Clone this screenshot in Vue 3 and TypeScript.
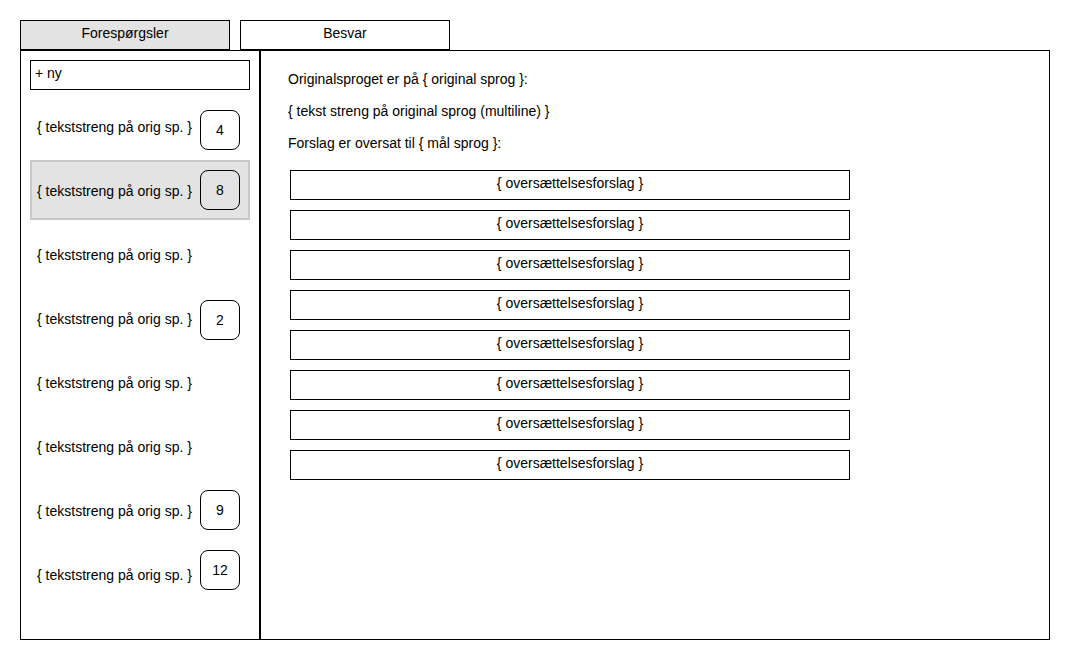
<script setup lang="ts">
import { ref } from 'vue'

interface TranslationRequest {
  id: number
  text: string
  answers: number | null
}

const tabs: string[] = ['Forespørgsler', 'Besvar']
const activeTab = ref<number>(0)

const counts: (number | null)[] = [4, 8, null, 2, null, null, 9, 12]
const requests: TranslationRequest[] = counts.map((answers, id) => ({
  id,
  text: '{ tekststreng på orig sp. }',
  answers,
}))
const selected = ref<number>(1)

const suggestions: string[] = Array.from({ length: 8 }, () => '{ oversættelsesforslag }')
</script>

<template>
  <div class="page">
    <nav class="tabs">
      <button
        v-for="(tab, i) in tabs"
        :key="tab"
        type="button"
        class="tab"
        :class="{ active: i === activeTab }"
        @click="activeTab = i"
      >
        {{ tab }}
      </button>
    </nav>

    <div class="panels">
      <aside class="sidebar">
        <button type="button" class="new">+ ny</button>
        <div class="requests">
          <ul class="labels">
            <li v-for="r in requests" :key="r.id">
              <button
                type="button"
                class="request"
                :class="{ selected: r.id === selected }"
                @click="selected = r.id"
              >
                {{ r.text }}
              </button>
            </li>
          </ul>
          <ul class="counts">
            <li v-for="r in requests" :key="r.id">
              <span v-if="r.answers !== null" class="count">{{ r.answers }}</span>
            </li>
          </ul>
        </div>
      </aside>

      <main class="detail">
        <p>Originalsproget er på { original sprog }:</p>
        <p>{ tekst streng på original sprog (multiline) }</p>
        <p>Forslag er oversat til { mål sprog }:</p>
        <ul class="suggestions">
          <li v-for="(s, i) in suggestions" :key="i">
            <button type="button" class="suggestion">{{ s }}</button>
          </li>
        </ul>
      </main>
    </div>
  </div>
</template>

<style>
body {
  margin: 0;
  background: #fff;
}
</style>

<style scoped>
.page,
.page * {
  box-sizing: border-box;
}

.page {
  display: flex;
  flex-direction: column;
  min-height: 100vh;
  padding: 20px;
  color: #000;
  font-family: "Liberation Sans", Arial, sans-serif;
  font-size: 14px;
  line-height: 16px;
}

button {
  margin: 0;
  color: inherit;
  font: inherit;
  background: #fff;
  border: 1px solid #000;
  border-radius: 0;
  cursor: pointer;
}

ul {
  margin: 0;
  padding: 0;
  list-style: none;
}

.tabs {
  display: flex;
  gap: 10px;
}

.tab {
  width: 210px;
  padding: 4px 4px 8px;
}

.tab.active {
  background: #e3e3e3;
}

.panels {
  display: flex;
  flex: 1;
}

.sidebar {
  width: 240px;
  flex-shrink: 0;
  padding: 9px;
  border: 1px solid #000;
}

.new {
  display: block;
  width: 100%;
  padding: 4px 4px 8px;
  text-align: left;
}

.requests {
  display: grid;
  grid-template-columns: 1fr 50px;
  padding-top: 6px;
}

.labels {
  grid-area: 1 / 1 / 2 / 3;
}

.labels li {
  height: 64px;
}

.request {
  display: block;
  width: 100%;
  height: 60px;
  padding: 2px 5px 0;
  text-align: left;
  white-space: nowrap;
  background: transparent;
  border: 2px solid transparent;
}

.request.selected {
  background: #e3e3e3;
  border-color: #c8c8c8;
}

.counts {
  display: grid;
  grid-area: 1 / 2 / 2 / 3;
  grid-template-rows: 60px 60px 70px 60px 65px 65px 60px 60px;
  align-content: start;
  padding-top: 4px;
  pointer-events: none;
}

.counts li {
  display: flex;
  align-items: center;
}

.count {
  display: flex;
  align-items: center;
  justify-content: center;
  width: 40px;
  height: 40px;
  border: 1px solid #000;
  border-radius: 8px;
}

.detail {
  flex: 1;
  min-width: 0;
  padding: 20px 27px;
  border: 1px solid #000;
}

.detail p {
  margin: 0 0 16px;
}

.suggestions {
  display: grid;
  gap: 10px;
  max-width: 562px;
  padding: 3px 0 0 2px;
}

.suggestion {
  display: block;
  width: 100%;
  padding: 4px 4px 8px;
}
</style>
